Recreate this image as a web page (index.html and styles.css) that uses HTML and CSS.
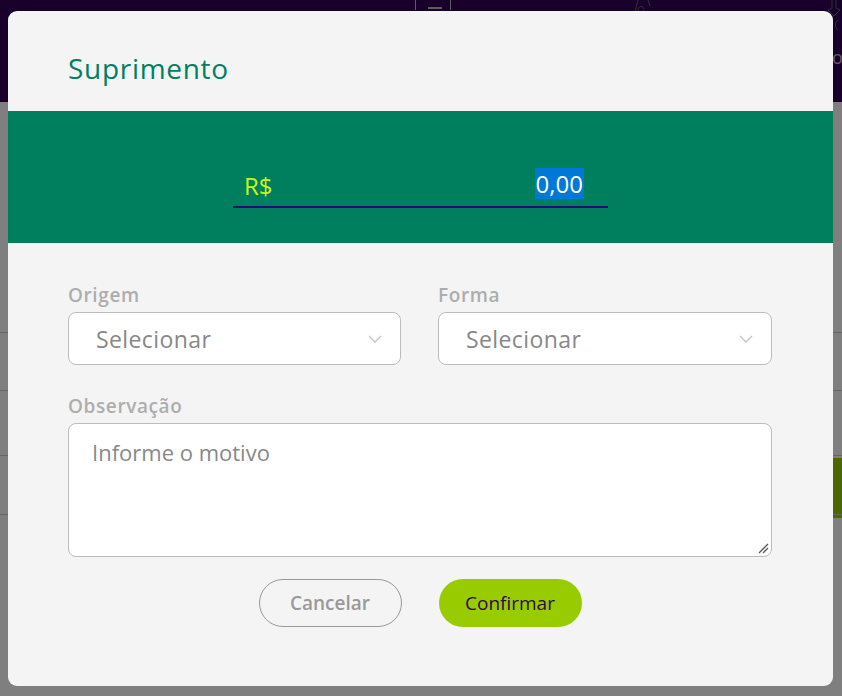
FILE: index.html
```html
<!DOCTYPE html>
<html lang="pt-BR">
<head>
<meta charset="utf-8">
<title>Suprimento</title>
<link rel="stylesheet" href="styles.css">
</head>
<body>
<div class="page">
  <header class="topbar">
    <div class="qty"><span class="minus"></span></div>
    <svg class="topicon one" width="30" height="14" viewBox="0 0 30 14"><path d="M8 0 L5 12 M14 10 a3 3 0 1 1 0 -1 M18 0 L20 6" fill="none" stroke="#6a5a80" stroke-width="1"/></svg>
    <svg class="topicon two" width="16" height="30" viewBox="0 0 16 30"><path d="M6 0 V8 L2 10 L8 16 L14 10 L10 8 V0" fill="none" stroke="#6a5a80" stroke-width="1"/><path d="M12 20 a6 6 0 0 0 0 10" fill="none" stroke="#6a5a80"/></svg>
    <span class="topletter">o</span>
  </header>
  <div class="rows">
    <div class="row r1"></div>
    <div class="row r2"></div>
    <div class="row r3"><span class="sidebtn">o</span></div>
    <div class="row r4"></div>
  </div>
</div>

<div class="overlay"></div>

<div class="modal">
  <h1 class="modal-title">Suprimento</h1>
  <div class="amount-band">
    <div class="amount-field">
      <span class="currency">R$</span>
      <span class="value"><span class="sel">0,00</span></span>
    </div>
  </div>
  <form class="form">
    <div class="grid">
      <label class="field">
        <span class="label">Origem</span>
        <span class="select"><span>Selecionar</span>
          <svg width="14" height="8" viewBox="0 0 14 8"><path d="M1 1 L7 7 L13 1" fill="none" stroke="#c4c4c4" stroke-width="1.3"/></svg>
        </span>
      </label>
      <label class="field">
        <span class="label">Forma</span>
        <span class="select"><span>Selecionar</span>
          <svg width="14" height="8" viewBox="0 0 14 8"><path d="M1 1 L7 7 L13 1" fill="none" stroke="#c4c4c4" stroke-width="1.3"/></svg>
        </span>
      </label>
    </div>
    <label class="field">
      <span class="label">Observação</span>
      <span class="textarea"><span class="placeholder">Informe o motivo</span>
        <svg class="grip" width="11" height="11" viewBox="0 0 11 11"><path d="M1 10 L10 1 M5 10 L10 5" stroke="#555" stroke-width="1.3"/></svg>
      </span>
    </label>
    <div class="actions">
      <button type="button" class="btn cancel">Cancelar</button>
      <button type="button" class="btn confirm">Confirmar</button>
    </div>
  </form>
</div>
</body>
</html>
```

FILE: styles.css
```css
html, body {
  margin: 0;
  padding: 0;
}
body {
  width: 842px;
  height: 696px;
  overflow: hidden;
  position: relative;
  font-family: "Open Sans", "Noto Sans", sans-serif;
  background: #fff;
}
.page {
  height: 696px;
  display: flex;
  flex-direction: column;
}
.topbar {
  height: 102px;
  background: #2f0052;
  position: relative;
}
.qty {
  position: absolute;
  left: 415px;
  top: -4px;
  width: 34px;
  height: 14px;
  border-left: 1px solid #bbb;
  border-right: 1px solid #bbb;
}
.minus {
  position: absolute;
  left: 12px;
  top: 11px;
  width: 14px;
  height: 2px;
  background: #bbb;
}
.topicon { position: absolute; }
.topicon.one { left: 630px; top: 0; }
.topicon.two { left: 826px; top: 0; }
.topletter {
  position: absolute;
  left: 832px;
  top: 45px;
  color: #bbb;
  font-size: 18px;
}
.rows {
  flex: 1;
  background: #fff;
  padding-top: 230px;
}
.row {
  border-top: 1px solid #ccc;
  position: relative;
}
.r1 { height: 57px; }
.r2 { height: 64px; }
.r3 { height: 58px; }
.r4 { height: 20px; }
.sidebtn {
  position: absolute;
  right: -20px;
  top: 2px;
  width: 40px;
  height: 60px;
  background: #99cc00;
  color: #2b0a4a;
  font-size: 22px;
  line-height: 60px;
  text-indent: -6px;
}
.overlay {
  position: absolute;
  inset: 0;
  background: rgba(0, 0, 0, 0.5);
}
.modal {
  position: absolute;
  left: 8px;
  top: 11px;
  width: 825px;
  height: 675px;
  background: #f4f4f4;
  border-radius: 9px;
  overflow: hidden;
}
.modal-title {
  margin: 0;
  height: 100px;
  box-sizing: border-box;
  padding: 37px 0 0 60px;
  font-size: 28px;
  line-height: 40px;
  font-weight: 400;
  color: #008060;
  letter-spacing: 0.7px;
}
.amount-band {
  height: 132px;
  background: #007f5f;
  display: flex;
  justify-content: center;
  padding-top: 49px;
  box-sizing: border-box;
}
.amount-field {
  width: 375px;
  height: 48px;
  border-bottom: 2px solid #2c0a6e;
  display: flex;
  justify-content: space-between;
  align-items: center;
  padding: 0 24px 0 11px;
  box-sizing: border-box;
  font-size: 24px;
}
.currency {
  color: #c8f51c;
  margin-top: 4px;
}
.value {
  color: #fff;
}
.sel {
  background: #0078d7;
  display: inline-block;
  line-height: 31px;
  padding: 0 1px;
  margin-top: -8px;
}
.form {
  padding: 39px 61px 0 60px;
  display: flex;
  flex-direction: column;
}
.grid {
  display: grid;
  grid-template-columns: 333px 334px;
  column-gap: 37px;
}
.field {
  display: flex;
  flex-direction: column;
}
.label {
  font-size: 19px;
  font-weight: 600;
  color: #adadad;
  line-height: 26px;
  margin-bottom: 4px;
  letter-spacing: 0.6px;
}
.select {
  height: 53px;
  box-sizing: border-box;
  border: 1px solid #bcbcbc;
  border-radius: 8px;
  background: #fff;
  display: flex;
  align-items: center;
  justify-content: space-between;
  padding: 0 18px 0 27px;
  font-size: 23px;
  letter-spacing: 0.4px;
  color: #888;
}
.grid + .field {
  margin-top: 28px;
}
.textarea {
  position: relative;
  height: 134px;
  box-sizing: border-box;
  border: 1px solid #bcbcbc;
  border-radius: 8px;
  background: #fff;
  padding: 13px 23px;
  font-size: 22px;
  color: #888;
}
.grip {
  position: absolute;
  right: 2px;
  bottom: 2px;
}
.actions {
  display: flex;
  justify-content: center;
  gap: 37px;
  margin-top: 22px;
}
.btn {
  width: 143px;
  height: 48px;
  border-radius: 24px;
  font-family: inherit;
  font-size: 19px;
  cursor: pointer;
}
.cancel {
  background: transparent;
  border: 1px solid #999;
  color: #999;
  font-weight: 600;
}
.confirm {
  background: #99cc00;
  border: none;
  color: #2b0a4a;
  font-weight: 500;
}
```
